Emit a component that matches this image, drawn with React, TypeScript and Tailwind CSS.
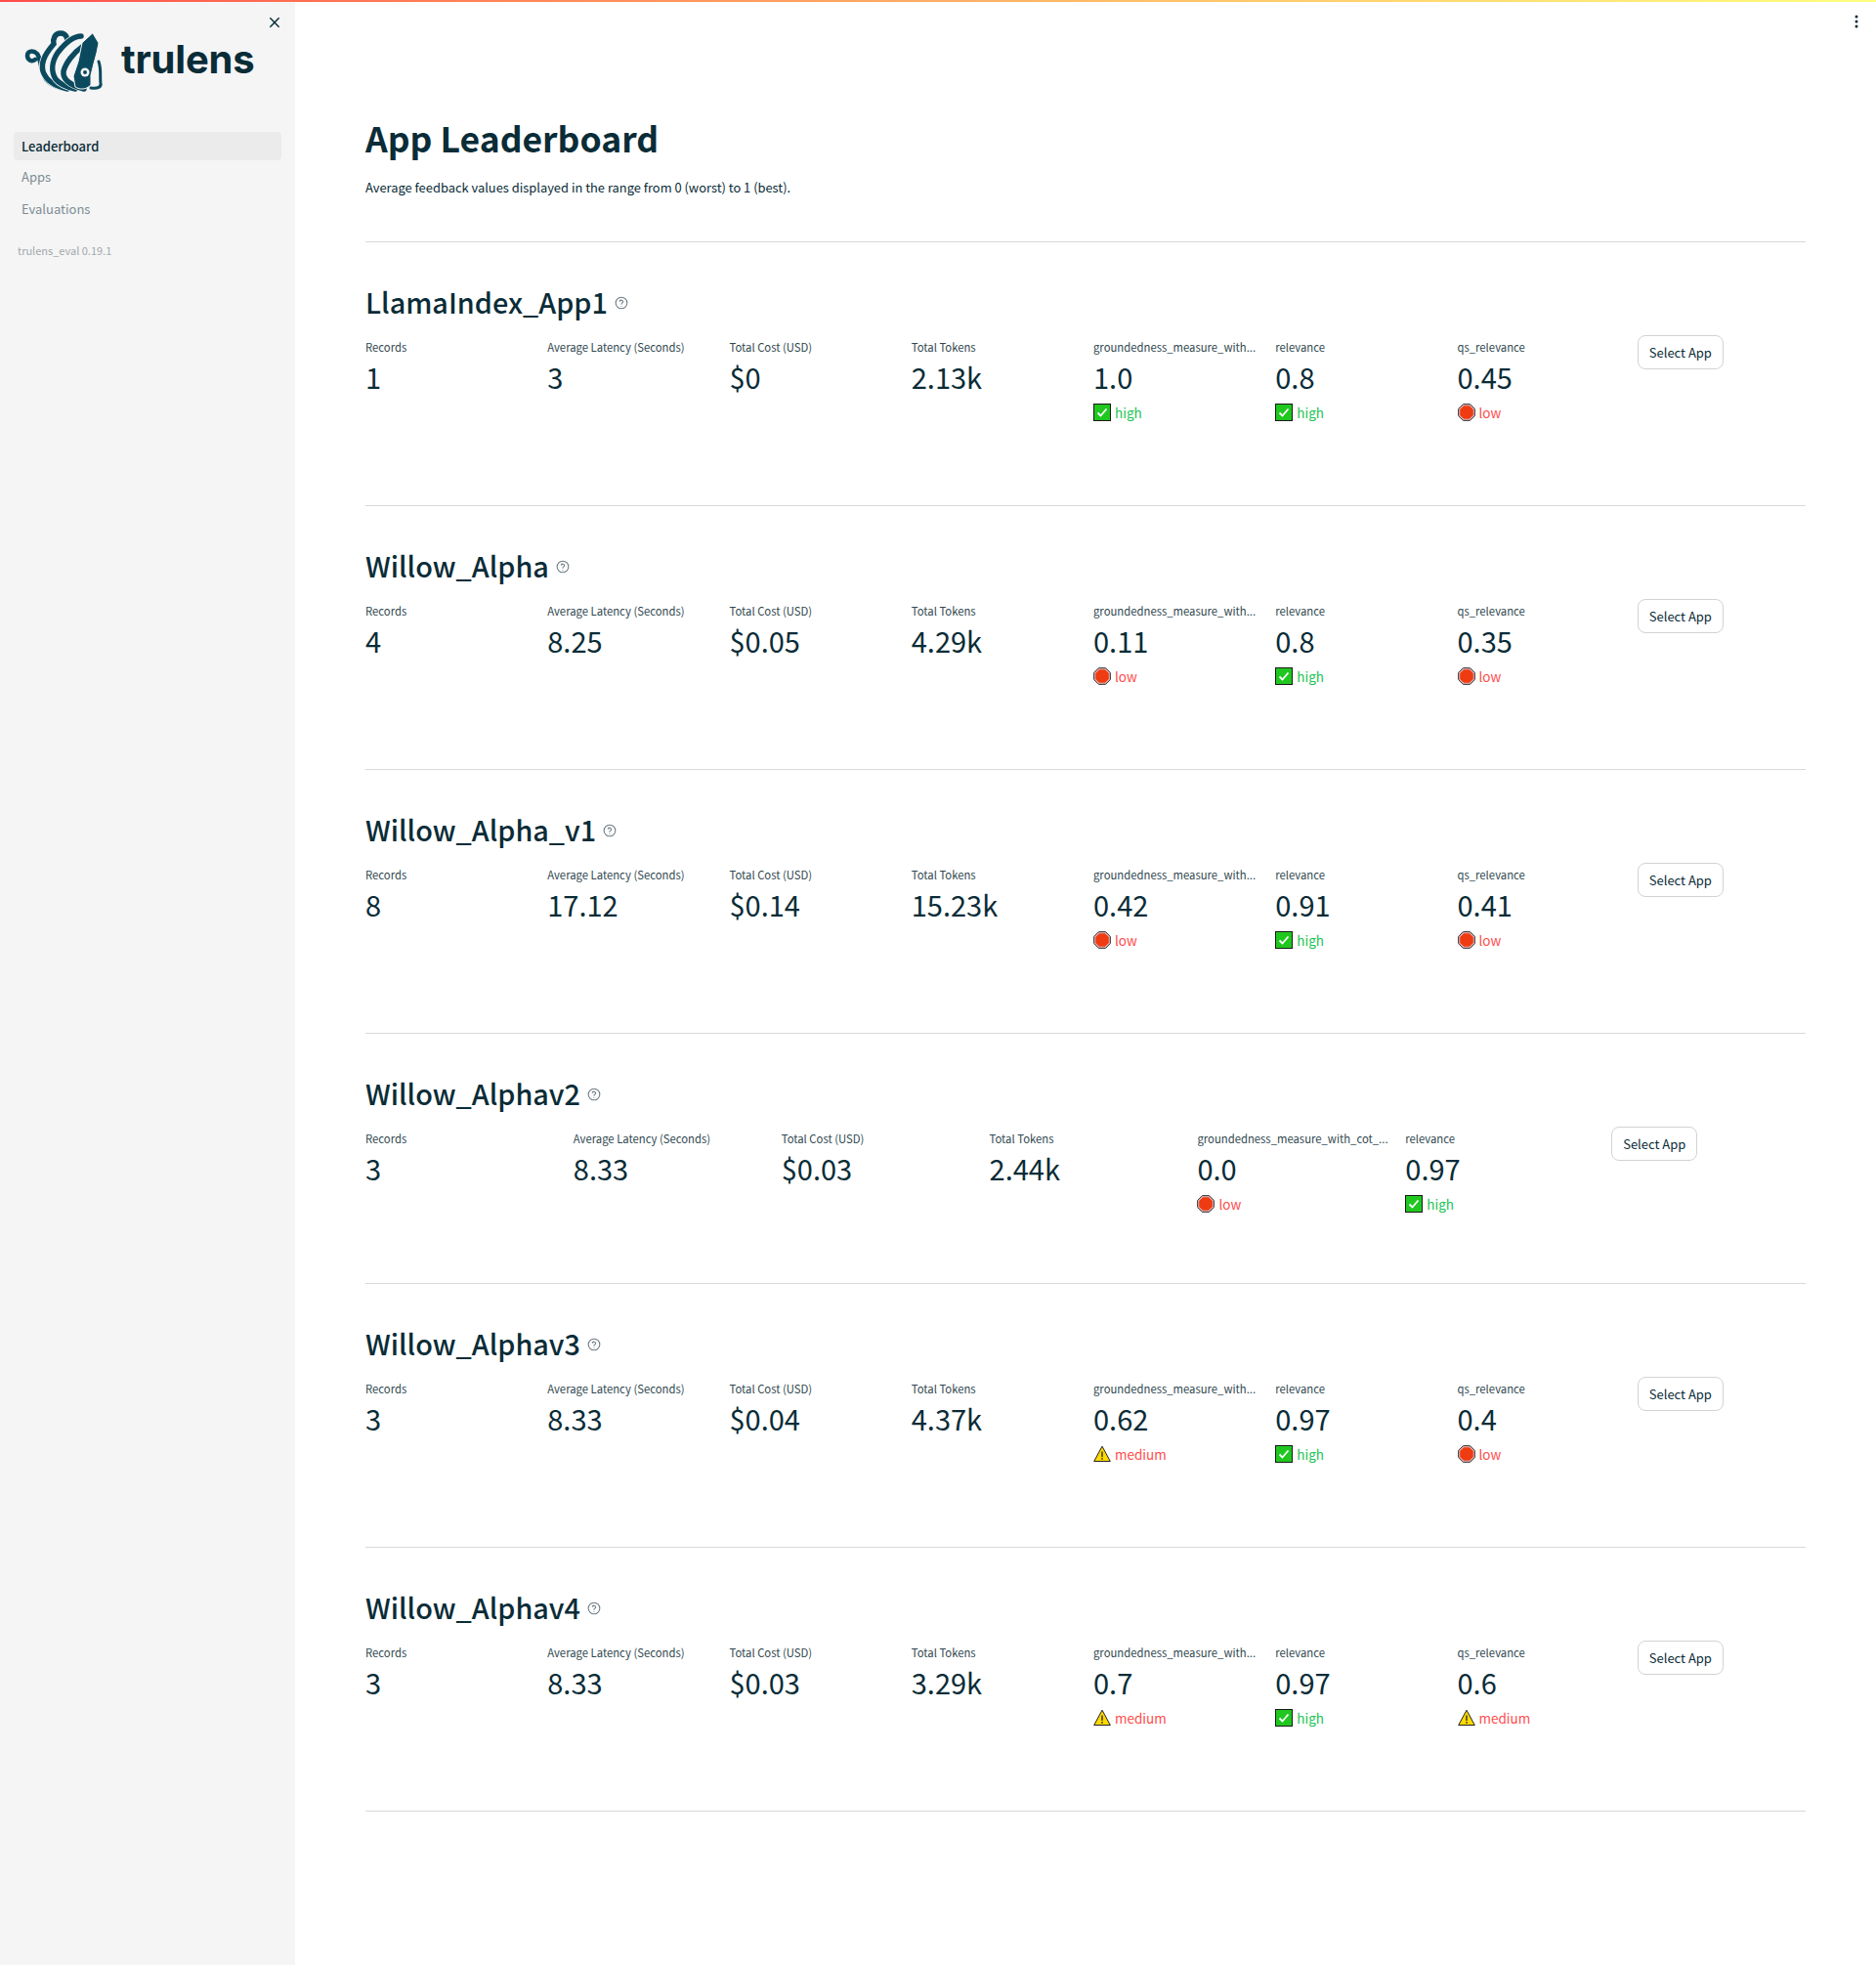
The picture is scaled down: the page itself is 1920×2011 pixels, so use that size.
type Level = 'high' | 'low' | 'medium';

type Metric = { label: string; value: string; level?: Level };

type AppRow = { name: string; records: string; latency: string; cost: string; tokens: string; feedback: Metric[] };

const G = 'groundedness_measure_with...';

const apps: AppRow[] = [
  { name: 'LlamaIndex_App1', records: '1', latency: '3', cost: '$0', tokens: '2.13k', feedback: [
    { label: G, value: '1.0', level: 'high' }, { label: 'relevance', value: '0.8', level: 'high' }, { label: 'qs_relevance', value: '0.45', level: 'low' } ] },
  { name: 'Willow_Alpha', records: '4', latency: '8.25', cost: '$0.05', tokens: '4.29k', feedback: [
    { label: G, value: '0.11', level: 'low' }, { label: 'relevance', value: '0.8', level: 'high' }, { label: 'qs_relevance', value: '0.35', level: 'low' } ] },
  { name: 'Willow_Alpha_v1', records: '8', latency: '17.12', cost: '$0.14', tokens: '15.23k', feedback: [
    { label: G, value: '0.42', level: 'low' }, { label: 'relevance', value: '0.91', level: 'high' }, { label: 'qs_relevance', value: '0.41', level: 'low' } ] },
  { name: 'Willow_Alphav2', records: '3', latency: '8.33', cost: '$0.03', tokens: '2.44k', feedback: [
    { label: 'groundedness_measure_with_cot_...', value: '0.0', level: 'low' }, { label: 'relevance', value: '0.97', level: 'high' } ] },
  { name: 'Willow_Alphav3', records: '3', latency: '8.33', cost: '$0.04', tokens: '4.37k', feedback: [
    { label: G, value: '0.62', level: 'medium' }, { label: 'relevance', value: '0.97', level: 'high' }, { label: 'qs_relevance', value: '0.4', level: 'low' } ] },
  { name: 'Willow_Alphav4', records: '3', latency: '8.33', cost: '$0.03', tokens: '3.29k', feedback: [
    { label: G, value: '0.7', level: 'medium' }, { label: 'relevance', value: '0.97', level: 'high' }, { label: 'qs_relevance', value: '0.6', level: 'medium' } ] },
];

function LevelIcon({ level }: { level: Level }) {
  if (level === 'high') {
    return (
      <svg width="18" height="18" viewBox="0 0 18 18" className="shrink-0">
        <rect x="0.5" y="0.5" width="17" height="17" fill="#1fc71f" stroke="#1a1a1a" />
        <path d="M4.5 9.5l3 3 6-7" fill="none" stroke="#fff" strokeWidth="1.8" />
      </svg>
    );
  }
  if (level === 'low') {
    return (
      <svg width="18" height="18" viewBox="0 0 18 18" className="shrink-0">
        <path d="M5.5 .7h7l4.800 4.800v7l-4.800 4.800h-7L.7 12.500v-7z" fill="#f0c0c0" stroke="#222" />
        <path d="M6 2.200h6l3.800 3.800v6L12 15.800H6L2.200 12V6z" fill="#ef3b12" />
      </svg>
    );
  }
  return (
    <svg width="18" height="18" viewBox="0 0 18 18" className="shrink-0">
      <path d="M9 1.200L17.300 16.500H.7z" fill="#ffd900" stroke="#222" strokeLinejoin="round" />
      <path d="M9 6.500v5.500M9 13v1.800" stroke="#222" strokeWidth="1.300" />
    </svg>
  );
}

function MetricCell({ label, value, level }: Metric) {
  const color = level === 'high' ? 'text-[#21c354]' : 'text-[#ff4b4b]';
  return (
    <div className="min-w-0">
      <div className="h-[20px] whitespace-nowrap text-[11.300px] leading-[20px] text-[#31484f]">{label}</div>
      <div className="text-[29px] leading-[40px] text-[#0a2c37]">{value}</div>
      {level && (
        <div className={`mt-[5px] flex h-[24px] items-center gap-[4px] text-[13.500px] ${color}`}>
          <LevelIcon level={level} />
          <span>{level}</span>
        </div>
      )}
    </div>
  );
}

function AppSection({ app }: { app: AppRow }) {
  const short = app.feedback.length === 2;
  return (
    <section className={`border-b border-[#d8d9dc] ${short ? 'h-[256px]' : 'h-[270px]'}`}>
      <div className="flex items-center gap-[7px] pt-[39px]">
        <h2 className="text-[28.800px] font-medium leading-[44px] text-[#0a2c37]">{app.name}</h2>
        <svg width="14" height="14" viewBox="0 0 24 24" fill="none" stroke="#6c7a80" strokeWidth="1.800" strokeLinecap="round" className="mt-[1px]">
          <circle cx="12" cy="12" r="10" />
          <path d="M9.100 9a3 3 0 0 1 5.800 1c0 2-3 2.500-3 4" />
          <path d="M12 17.500h.01" />
        </svg>
      </div>
      <div className={`mt-[14px] grid gap-4 ${short ? 'grid-cols-7' : 'grid-cols-8'}`}>
        <MetricCell label="Records" value={app.records} />
        <MetricCell label="Average Latency (Seconds)" value={app.latency} />
        <MetricCell label="Total Cost (USD)" value={app.cost} />
        <MetricCell label="Total Tokens" value={app.tokens} />
        {app.feedback.map((f) => (
          <MetricCell key={f.label} {...f} />
        ))}
        <div>
          <button className="-ml-[2px] -mt-[2px] h-[35px] rounded-lg border border-[#d0d3d6] bg-white px-[11px] text-[13px] text-[#0a2c37]">Select App</button>
        </div>
      </div>
    </section>
  );
}

function Squid() {
  const bg = '#f5f5f5';
  const ink = '#0b4a5e';
  const arms = [
    { d: 'M16 40C12 43 8 40 8 36C8 31 14 30 18 34C22 39 21 50 27 60C31 65 36 67 42 69', w: 4.5 },
    { d: 'M47 24C51 20 48 13 42 13C36 13 34 19 35 24C29 31 21 41 24 52C27 61 35 67 49 70', w: 5.500 },
    { d: 'M63 16C55 16 46 24 39 33C33 42 32 52 37 60C41 65 48 68 57 70', w: 5.500 },
    { d: 'M64 27C55 33 47 44 45 52C44 60 51 66 66 70', w: 5.500 },
  ];
  return (
    <svg width="100" height="80" viewBox="0 0 100 80" fill="none" strokeLinecap="round" className="-my-[10px] -ml-[6px] -mr-[16px] shrink-0">
      <path d="M81 42C84 50 82 58 83 64C84 68 80 70 73 69" stroke={ink} strokeWidth="3" />
      {arms.map((a) => (
        <g key={a.d}>
          <path d={a.d} stroke={bg} strokeWidth={a.w + 1.500} />
          <path d={a.d} stroke={ink} strokeWidth={a.w} />
        </g>
      ))}
      <path d="M75 13L81 23L79 33L76 44L73 56L73 66C68 71 62 71 57 68L55 57L60 42L64 23Z" fill={ink} stroke={bg} strokeWidth="1" />
      <circle cx="67" cy="53" r="4.500" fill={bg} />
      <circle cx="67" cy="53" r="2" fill={ink} />
    </svg>
  );
}

export default function App() {
  return (
    <div className="relative flex min-h-[2011px] bg-white font-['Noto_Sans_CJK_SC','Noto_Sans',sans-serif]">
      <div className="absolute inset-x-0 top-0 z-10 h-[2px] bg-gradient-to-r from-[#ff4b4b] to-[#ffff7d]" />

      <aside className="relative w-[302px] shrink-0 bg-[#f5f5f5]">
        <svg width="16" height="16" viewBox="0 0 24 24" fill="none" stroke="#0a2c37" strokeWidth="2.200" className="absolute right-[13px] top-[15px]">
          <path d="M5 5l14 14M19 5L5 19" />
        </svg>
        <div className="flex items-center gap-[20px] pl-[26px] pt-[31px]">
          <Squid />
          <span className="font-['Inter',sans-serif] text-[40px] font-bold leading-[60px] tracking-[-0.2px] text-[#0a2c37]">trulens</span>
        </div>
        <nav className="mx-[14px] mt-[44px] flex flex-col text-[13px]">
          <a className="flex h-[29px] items-center rounded bg-[#ebebeb] px-[8px] font-medium text-[#0a2c37]">Leaderboard</a>
          <a className="mt-[2px] flex h-[29px] items-center px-[8px] text-[#7d8d94]">Apps</a>
          <a className="mt-[4px] flex h-[29px] items-center px-[8px] text-[#7d8d94]">Evaluations</a>
        </nav>
        <div className="ml-[18px] mt-[19px] text-[11px] leading-[18px] text-[#a3a8ac]">trulens_eval 0.19.1</div>
      </aside>

      <main className="relative min-w-0 flex-1 pl-[72px] pr-[72px]">
        <svg width="4" height="14" viewBox="0 0 4 14" fill="#0a2c37" className="absolute right-[18px] top-[15px]">
          <circle cx="2" cy="2" r="1.500" />
          <circle cx="2" cy="7" r="1.500" />
          <circle cx="2" cy="12" r="1.500" />
        </svg>
        <div className="h-[248px] border-b border-[#d8d9dc] pt-[113px]">
          <h1 className="text-[35.500px] font-bold leading-[56px] text-[#0a2c37]">App Leaderboard</h1>
          <p className="mt-[13px] text-[12.900px] leading-[20px] text-[#0a2c37]">Average feedback values displayed in the range from 0 (worst) to 1 (best).</p>
        </div>
        {apps.map((a) => (
          <AppSection key={a.name} app={a} />
        ))}
      </main>
    </div>
  );
}
